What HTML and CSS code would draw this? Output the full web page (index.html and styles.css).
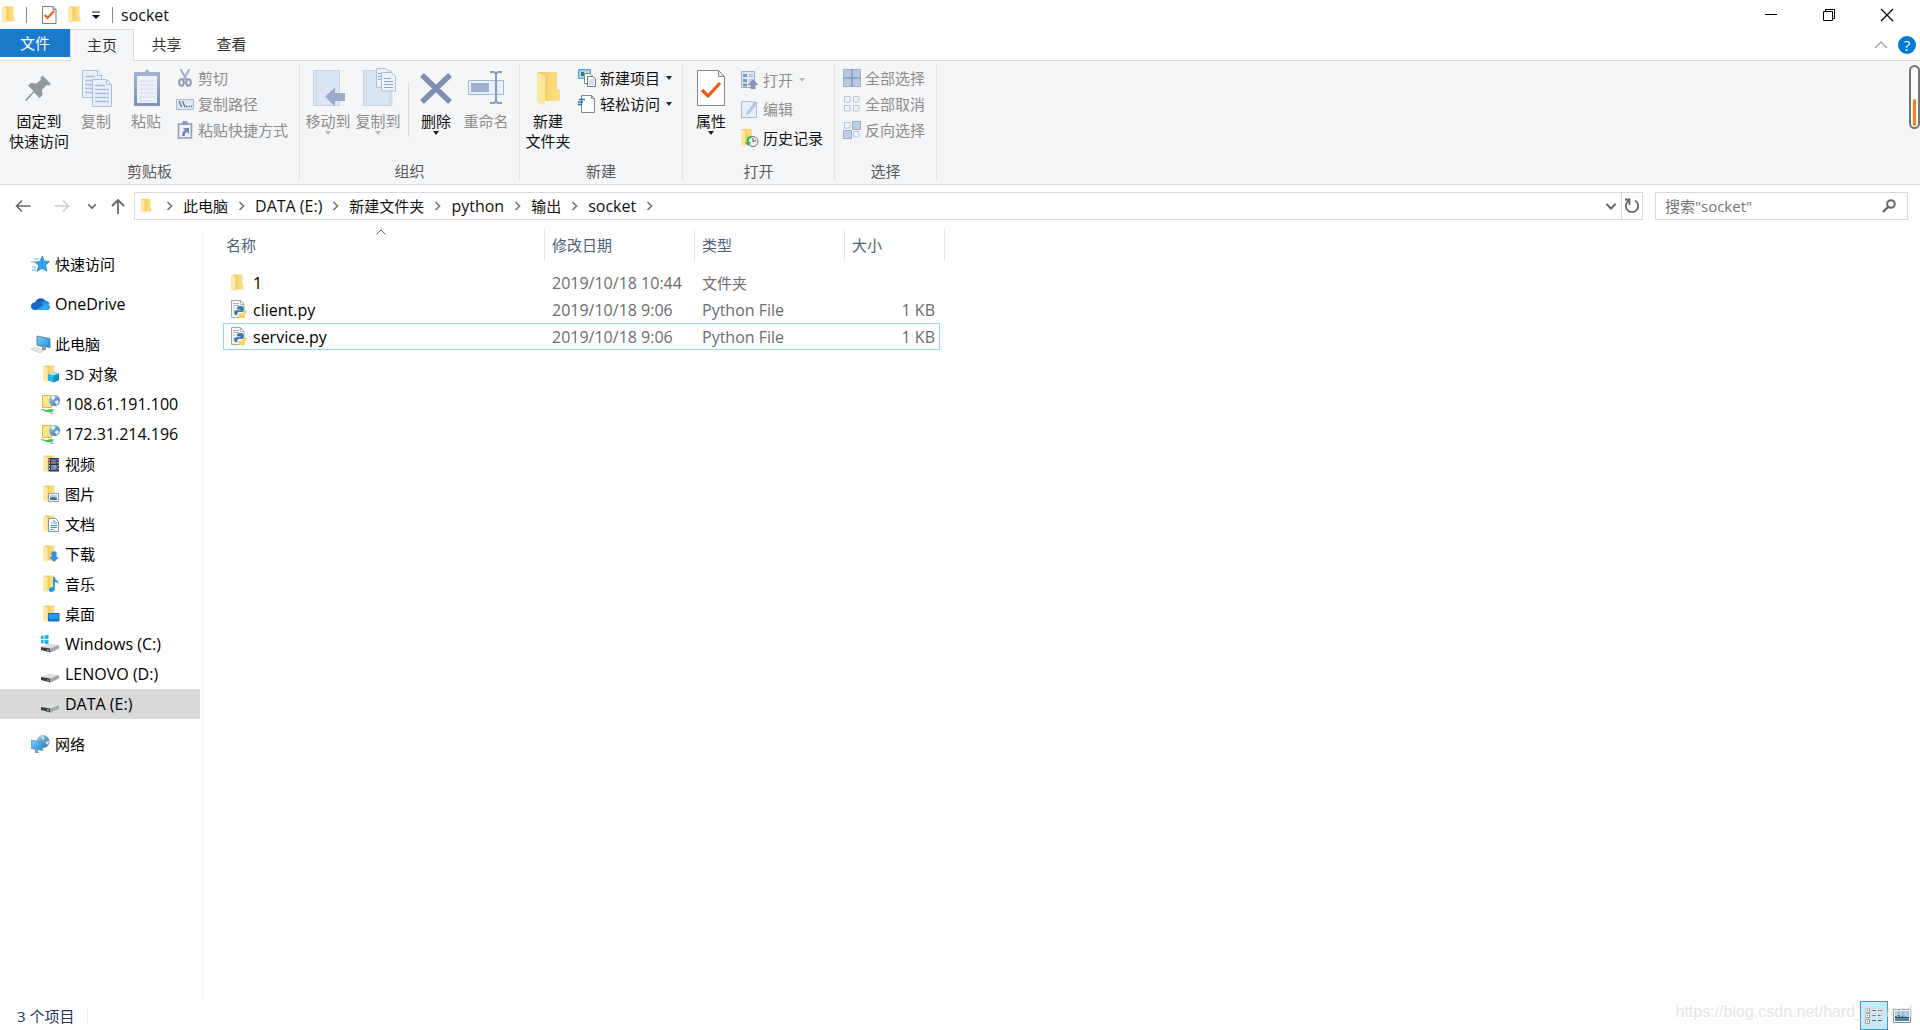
FILE: index.html
```html
<!DOCTYPE html>
<html lang="zh-CN">
<head>
<meta charset="utf-8">
<title>socket</title>
<link rel="stylesheet" href="styles.css">
</head>
<body>
<svg class="sprite" aria-hidden="true">
  <defs>
    <linearGradient id="g-folder" x1="0" x2="1" y1="0" y2="0"><stop offset="0" stop-color="#e9bf55"/><stop offset=".6" stop-color="#fbd978"/><stop offset="1" stop-color="#fddf86"/></linearGradient>
    <linearGradient id="g-globe" x1="0" x2="1" y1="0" y2="1"><stop offset="0" stop-color="#a9d3ec"/><stop offset="1" stop-color="#2c6f9f"/></linearGradient>
    <linearGradient id="g-screen" x1="0" x2="1" y1="0" y2="1"><stop offset="0" stop-color="#7fd0fb"/><stop offset="1" stop-color="#1f8fdd"/></linearGradient>
    <linearGradient id="g-board" x1="0" x2="0" y1="0" y2="1"><stop offset="0" stop-color="#a3b3cd"/><stop offset="1" stop-color="#7f92b5"/></linearGradient>
  </defs>
  <symbol id="i-folder" viewBox="0 0 20 20"><path d="M4 1.500h9.500v10l1 1v4H6z" fill="url(#g-folder)"/><path d="M2 1.500l4.500 2v15L2 16.500z" fill="#ffe9a8"/></symbol>
  <symbol id="i-3d" viewBox="0 0 20 20"><use href="#i-folder"/><path d="M7 10l6-2 5 1.500v6.500l-5.500 2.500L7 16.500z" fill="#2bb5dd"/><path d="M7 10l6-2 5 1.500-5.500 2z" fill="#a5e6f6"/><path d="M12.500 11.500l5.500-2v6.500l-5.500 2.500z" fill="#0a93bf"/></symbol>
  <symbol id="i-netloc" viewBox="0 0 20 20"><path d="M1.500 1.500h9v12h-9z" fill="#ffe48e" stroke="#e2b93f"/><circle cx="13.500" cy="6.500" r="5.500" fill="url(#g-globe)"/><path d="M10 3l3-1.500 1.500 2-3 3zM13.500 8l3-2 1.500 2-2 3z" fill="#e6f4fb"/><path d="M-1 15h4v1.500h-4zM9 19h4v1H9z" fill="#b7bcc0"/><path d="M1 15.500l4 2.500 6 .500 2-3-4-.500-3 1z" fill="#3fc45a"/></symbol>
  <symbol id="i-video" viewBox="0 0 20 20"><use href="#i-folder"/><path d="M7.500 4h10.500v13.500H7.500z" fill="#333"/><path d="M8.500 5v12M17 5v12" stroke="#ddd" stroke-width="1" stroke-dasharray="1.500 1.500"/><path d="M10 5h5.500v5H10z" fill="#3b76c8"/><path d="M10 11h5.500v5H10z" fill="#5a8fe0"/><path d="M10 7l3 1 2.500 2H10z" fill="#e64b3c"/><path d="M12 11l3.500 1v2z" fill="#ecc23b"/></symbol>
  <symbol id="i-picture" viewBox="0 0 20 20"><use href="#i-folder"/><path d="M7.500 9.500h10v8h-10z" fill="#fff" stroke="#979797"/><path d="M9 11h7v5H9z" fill="#a9cdec"/><path d="M9 14l3-1 4 1v2H9z" fill="#3c708c"/></symbol>
  <symbol id="i-doc" viewBox="0 0 20 20"><use href="#i-folder"/><path d="M7.500 4.500h7l3 3v10h-10z" fill="#fff" stroke="#8e8e8e"/><path d="M10 9h1.500m1.500 0h3M9.500 11.500h6.500M9.500 13.500h6.500M9.500 15.500h3" stroke="#3797dc"/><path d="M13 6v3" stroke="#3797dc"/></symbol>
  <symbol id="i-download" viewBox="0 0 20 20"><use href="#i-folder"/><path d="M10.500 7.500h5V13H18l-5 5-5-5h2.500z" fill="#3a8ee0"/></symbol>
  <symbol id="i-music" viewBox="0 0 20 20"><use href="#i-folder"/><path d="M12 3h1.800c0 3 4.500 3.500 4 8-.500-2-2-3-4-3v7c0 3.500-6 4-6 1 0-2.500 2.500-3 4.200-2.500z" fill="#1c9bea"/></symbol>
  <symbol id="i-desktop" viewBox="0 0 20 20"><use href="#i-folder"/><path d="M7.500 9.500h10.500v7.500H7.500z" fill="#1e9df1" stroke="#176fb5"/><path d="M8 16h10" stroke="#0c4f86" stroke-dasharray="2 1"/></symbol>
  <symbol id="i-drive" viewBox="0 0 20 20"><path d="M0 13l9-3.500 9 1.500-8.500 3.500z" fill="#dedee0"/><path d="M0 13l9.500 1.500v4L0 16z" fill="#3e3f42"/><path d="M9.500 14.500L18 11v3.500l-8.500 4z" fill="#a5a6aa"/><path d="M6 16l2 .500" stroke="#40e070" stroke-width="1.500"/></symbol>
  <symbol id="i-cdrive" viewBox="0 0 20 20"><use href="#i-drive"/><path d="M-1 2l3.500-.500v3.500H-1zM3.500 1.500L7.500.800V5h-4zM-1 6h3.500v3.500L-1 9zM3.500 6h4v4.200l-4-.700z" fill="#14b5ee"/></symbol>
  <symbol id="i-star" viewBox="0 0 20 20"><path d="M11.500 2l1.800 5.200 5.200.3-4 3.700 1.500 6-5-3-5 3.300 1.800-6-4-3.500 5-.4z" fill="#2fa4ee" stroke="#1578c2" stroke-width=".7"/><path d="M3 5h5M0 8h4M1 13h4M1 16h4" stroke="#6ab8ee"/></symbol>
  <symbol id="i-cloud" viewBox="0 0 20 20"><path d="M4 9c1-5 8-6.500 10.500-2l-5 5z" fill="#0d62bb"/><path d="M13 7c3-1 5 .500 5.500 3L12 14l-3-5z" fill="#1a8ce2"/><path d="M3.500 8.500c3-1.500 5-.500 7 1L17 16H3.500C-1.500 15.500-1 9 3.500 8.500z" fill="#1467c6"/><path d="M5 16l8-5.500c4-2 8 2 5.500 4.500-.500.700-1.200 1-2 1z" fill="#2aa5f0"/></symbol>
  <symbol id="i-pc" viewBox="0 0 20 20"><path d="M6 2l13 2.500v9L6 11.500z" fill="url(#g-screen)" stroke="#56636d" stroke-width=".7"/><path d="M11 13l4 .500v2.500h-4z" fill="#87929b"/><path d="M0 15l4-2 9 3.500L9 19z" fill="#e6e9eb" stroke="#b3b8bc" stroke-width=".6"/></symbol>
  <symbol id="i-network" viewBox="0 0 20 20"><circle cx="12" cy="7.500" r="6.500" fill="url(#g-globe)"/><path d="M9 2l4 1v3zM14 8l4-1-1 4z" fill="#d9eef8"/><path d="M0 6l11.500 2v8.500L0 14.500z" fill="url(#g-screen)" stroke="#5187b0" stroke-width=".6"/><path d="M4 15.500l3 .500v2l2 1H4z" fill="#8d989f"/></symbol>
  <symbol id="i-py" viewBox="0 0 20 20"><path d="M2.500.500h9l3.500 3.500v13.500H2.500z" fill="#f7f7f7" stroke="#a5a5a5"/><path d="M11.500.500v4H15M4 3.500h6M4 5.500h6M4 8h2M4 11h2" fill="none" stroke="#b5b5b5"/><g transform="translate(.6 .8) scale(.88)"><path d="M12 6c-2.500 0-3.500.800-3.500 2v2h4v.800H7.500c-3 0-3 5.700 0 5.700h1.200v-1.500c0-1.500 1-2.200 2-2.200h3.200c1.200 0 2-1 2-2V8c0-1.500-1.500-2-3.900-2z" fill="#3b78b0"/><path d="M13 19.500c2.500 0 3.500-.700 3.500-2v-1.500h-3.500v-.800h4.200c3 0 3-4.700.3-4.900v1.500c0 1.500-1 2.400-2 2.400h-3c-1.300 0-2.300 1-2.300 2v1.500c0 1.200 1 1.800 2.800 1.800z" fill="#ffd43b"/></g></symbol>
  <symbol id="i-check" viewBox="0 0 36 40"><path d="M4.500 2.500h21l6 6v29h-27z" fill="#fff" stroke="#888"/><path d="M25.500 2.500v6h6z" fill="#eee" stroke="#888"/><path d="M9 22l6 6 12-13" fill="none" stroke="#f4580f" stroke-width="3.200"/></symbol>
  <symbol id="i-qcheck" viewBox="0 0 16 20"><path d="M.5 1.500h10.500l3 3V18.500H.5z" fill="#fff" stroke="#7c7c7c"/><path d="M11 1.500v3h3" fill="none" stroke="#7c7c7c"/><path d="M2.500 10l3 3 6.500-7" fill="none" stroke="#ee5b1c" stroke-width="2"/></symbol>
  <symbol id="i-pin" viewBox="0 0 36 40"><path d="M21.500 7.500l8.500 8.500-2.500 1.500-2-.500-4.500 5 .500 5-3 3-5.500-5.500L5.500 33 4 32l8.500-9L7 17.500l3-2.500 5.500.500 4.500-4-.500-2z" fill="#8d9ba1"/></symbol>
  <symbol id="i-copy" viewBox="0 0 36 40"><g fill="#eaf0f9" stroke="#a9bddc"><path d="M4.500 2.500h15l4 4v23h-19z"/><path d="M19.500 2.500v5h5"/><path d="M14.500 11.500h14l5 5v22h-19z"/><path d="M28.500 11.500v5h5z"/></g><path d="M7 8.500h10M7 12.500h7M7 16.500h7M7 20.500h7M7 24.500h7M17 17.500h10M17 21.500h14M17 25.500h14M17 29.500h14M17 33.500h14" stroke="#a9bddc" stroke-width="1.300"/></symbol>
  <symbol id="i-paste" viewBox="0 0 36 40"><rect x="6" y="4" width="26" height="34" rx="1" fill="url(#g-board)"/><path d="M9 8h20v27H9z" fill="#edf2fa"/><path d="M11 13h16M11 17h16M11 21h16M11 25h16M11 29h16M11 33h16" stroke="#cfdbec"/><path d="M12 8l2-4h3a2 2.500 0 0 1 4 0h3l2 4z" fill="#a5b4cd"/></symbol>
  <symbol id="i-cut" viewBox="0 0 18 18"><path d="M4.500 0l6 11M13.500 0l-6 11" stroke="#a4b3cc" stroke-width="2"/><ellipse cx="5.500" cy="13.500" rx="2.300" ry="3.200" fill="none" stroke="#8b9cbb" stroke-width="2"/><ellipse cx="12.500" cy="13.500" rx="2.300" ry="3.200" fill="none" stroke="#8b9cbb" stroke-width="2"/></symbol>
  <symbol id="i-path" viewBox="0 0 18 18"><path d="M.5 4.500h17v10H.5z" fill="#dfe8f5" stroke="#a9bbd8"/><path d="M3 6l2.500 6M6.500 6L9 12M10 11.500h1.500m1 0H14m1 0h1" stroke="#5c6e91" stroke-width="1.300"/></symbol>
  <symbol id="i-shortcut" viewBox="0 0 18 18"><path d="M2.500 3h13v14h-13z" fill="#eef3fb" stroke="#8c9dbd" stroke-width="1.600"/><path d="M5 4l2-4h4l2 4z" fill="#8c9dbd"/><path d="M7 7h6v6l-2-2c-1.500.500-2.300 2-2.300 4H6c0-3 1-4.800 3-6z" fill="#7488ae"/></symbol>
  <symbol id="i-moveto" viewBox="0 0 36 40"><path d="M3.500 2.500h26v35h-26z" fill="#dce6f3" stroke="#c5d3e7"/><path d="M6.500 3v34" stroke="#cad7e9"/><path d="M15 28.500l10-9v5.500h10v8H25v5.500z" fill="#9baccb"/></symbol>
  <symbol id="i-copyto" viewBox="0 0 36 40"><path d="M3.500 2.500h28v35h-28z" fill="#dce6f3" stroke="#c5d3e7"/><path d="M6.500 3v34" stroke="#cad7e9"/><g fill="#edf3fb" stroke="#a9bddc"><path d="M16.500.500h9l3 3v16h-12z"/><path d="M21.500 4.500h10l4 4v14.500h-14z"/></g><path d="M24 10.500h7M24 13.500h9M24 16.500h9M24 19.500h9M18 5.500h3M18 8.500h3M18 11.500h3" stroke="#8fa6cc"/><path d="M28.500 26c3-2 4 0 4 3v8h-4z" fill="#cfdbec"/></symbol>
  <symbol id="i-delete" viewBox="0 0 36 40"><path d="M4 7l28 27M32 7L4 34" stroke="#7e90b1" stroke-width="5.500"/></symbol>
  <symbol id="i-rename" viewBox="0 0 36 40"><path d="M.5 12.500h35v14H.5z" fill="#eaf1fa" stroke="#a3b7d8"/><path d="M3 15h18v9H3z" fill="#a0b1d0"/><path d="M22 4h4l2 1.500L30 4h4M22 35h4l2-1.500 2 1.500h4M28 5v29" fill="none" stroke="#8b9cbd" stroke-width="2.200"/></symbol>
  <symbol id="i-bigfolder" viewBox="0 0 36 40"><path d="M7 4h20v17l3 1v11H14z" fill="url(#g-folder)"/><path d="M7 4l8 4v30l-8-4z" fill="#ffe7a0"/></symbol>
  <symbol id="i-newitem" viewBox="0 0 18 18"><path d="M.7.700h11.600v8.600H.7z" fill="#a9dcf3" stroke="#3b8fc0"/><path d="M3 3h3v4H3z" fill="#367f5d"/><path d="M6.500 4.500h5.500l2 2v8H6.500z" fill="#fff" stroke="#888"/><path d="M9.500 7.500H15l2.500 2.500v7.500h-8z" fill="#fff" stroke="#777"/><path d="M11 11h5M11 13h5M11 15h5" stroke="#9bbbe0"/></symbol>
  <symbol id="i-easy" viewBox="0 0 18 18"><path d="M3.500.500h10l3 3v14h-13z" fill="#fff" stroke="#888"/><path d="M13.500.500v3h3" fill="none" stroke="#888"/><path d="M1 4.500h6M0 7h5M-1 9.500h5" stroke="#1b76c4" stroke-width="1.400"/></symbol>
  <symbol id="i-open" viewBox="0 0 18 18"><path d="M.5.500h13v16H.5z" fill="#dfe8f5" stroke="#9fb1d2"/><path d="M2 3h4v3H2zM2 8h4v3H2zM2 12.500h4v3H2z" fill="#8195ba"/><path d="M8 3.500h4M8 5.500h4M8 9h3" stroke="#9fb1d2"/><path d="M12 8l5.500 6h-3v4h-5v-4h-3z" fill="#8597b9"/></symbol>
  <symbol id="i-edit" viewBox="0 0 18 18"><path d="M.5 1.500h11l4 4v12H.5z" fill="#e8eff9" stroke="#a9bbd9"/><path d="M5 15l1-3L14 1l3 2-8.500 10.500z" fill="#b5c5df"/></symbol>
  <symbol id="i-history" viewBox="0 0 18 18"><path d="M1 0h10v16H4z" fill="url(#g-folder)"/><path d="M0 0l4 2v16l-4-2z" fill="#ffe9a8"/><circle cx="12" cy="12.500" r="5" fill="#eee" stroke="#777"/><path d="M12 9v3.500l3-1" fill="none" stroke="#555"/><path d="M10 7c-4 0-5 4-4 6l-2 .500 3.500 3.500 2.500-4-2 .200C7 11 8 9 11 8.500z" fill="#2eb84b"/></symbol>
  <symbol id="i-selall" viewBox="0 0 18 18"><path d="M.5.500h17v17H.5z" fill="#b9c9e2" stroke="#9fb1cf"/><path d="M9 0v18M0 9h18" stroke="#8396b8" stroke-width="1.500"/></symbol>
  <symbol id="i-selnone" viewBox="0 0 18 18"><path d="M1.500 1.500h5.500v5.500H1.500zM10.500 1.500h5.500v5.500h-5.500zM1.500 10.500h5.500v5.500H1.500zM10.500 10.500h5.500v5.500h-5.500z" fill="#f1f5fc" stroke="#b4c5e2"/></symbol>
  <symbol id="i-invert" viewBox="0 0 18 18"><path d="M1.500 1.500h5.500v5.500H1.500zM10.500 10.500h5.500v5.500h-5.500z" fill="#f1f5fc" stroke="#b4c5e2"/><path d="M9.500.500h8v8h-8zM.5 9.500h8v8h-8z" fill="#c0cee5" stroke="#98abcb"/></symbol>
  <symbol id="i-chev" viewBox="0 0 12 12"><path d="M4 2l4 4-4 4" fill="none" stroke="#777" stroke-width="1.700"/></symbol>
  <symbol id="i-down" viewBox="0 0 12 12"><path d="M1.500 4L6 8.500 10.500 4" fill="none" stroke="currentColor" stroke-width="2"/></symbol>
  <symbol id="i-left" viewBox="0 0 16 16"><path d="M15.500 8H1M7 2.500L1.500 8 7 13.500" fill="none" stroke="currentColor" stroke-width="1.600"/></symbol>
</svg>

<header class="titlebar">
  <svg class="ico-20"><use href="#i-folder"/></svg>
  <span class="bar bar-first"></span>
  <button class="quick quick-check" aria-label="属性"><svg class="ico-q"><use href="#i-qcheck"/></svg></button>
  <button class="quick" aria-label="新建文件夹"><svg class="ico-20"><use href="#i-folder"/></svg></button>
  <button class="quick quick-more" aria-label="自定义快速访问工具栏"><svg width="8" height="8"><path d="M0 1h8" stroke="#111"/><path d="M0 4h8L4 8z" fill="#111"/></svg></button>
  <span class="bar"></span>
  <h1 class="title">socket</h1>
  <div class="winbtns">
    <button aria-label="最小化"><svg width="12" height="12"><path d="M0 5.500h12" stroke="#000"/></svg></button>
    <button aria-label="还原"><svg width="12" height="12"><path d="M.5 2.500h9v9h-9zM2.500 2V.500h9v9H10" fill="none" stroke="#000"/></svg></button>
    <button aria-label="关闭"><svg width="12" height="12"><path d="M0 0l12 12M12 0L0 12" stroke="#000" stroke-width="1.200"/></svg></button>
  </div>
</header>

<nav class="tabs">
  <button class="tab tab-file">文件</button>
  <button class="tab tab-on">主页</button>
  <button class="tab">共享</button>
  <button class="tab">查看</button>
  <div class="tabs-end">
    <button aria-label="最小化功能区"><svg width="12" height="8"><path d="M0 7l6-6 6 6" fill="none" stroke="#999" stroke-width="1.200"/></svg></button>
    <button class="help" aria-label="帮助">?</button>
  </div>
</nav>

<section class="ribbon">
  <div class="group g-clip">
    <div class="tools">
      <button class="big big-wide"><svg class="ico-big"><use href="#i-pin"/></svg><span>固定到<br>快速访问</span></button>
      <button class="big" disabled><svg class="ico-big"><use href="#i-copy"/></svg><span>复制</span></button>
      <button class="big" disabled><svg class="ico-big"><use href="#i-paste"/></svg><span>粘贴</span></button>
      <div class="smalls">
        <button class="small" disabled><svg class="ico-18"><use href="#i-cut"/></svg>剪切</button>
        <button class="small" disabled><svg class="ico-18"><use href="#i-path"/></svg>复制路径</button>
        <button class="small" disabled><svg class="ico-18"><use href="#i-shortcut"/></svg>粘贴快捷方式</button>
      </div>
    </div>
    <h2 class="gname">剪贴板</h2>
  </div>
  <div class="group g-org">
    <div class="tools">
      <button class="big" disabled><svg class="ico-big"><use href="#i-moveto"/></svg><span>移动到</span><i class="caret"></i></button>
      <button class="big" disabled><svg class="ico-big"><use href="#i-copyto"/></svg><span>复制到</span><i class="caret"></i></button>
      <span class="split"></span>
      <button class="big"><svg class="ico-big"><use href="#i-delete"/></svg><span>删除</span><i class="caret"></i></button>
      <button class="big" disabled><svg class="ico-big"><use href="#i-rename"/></svg><span>重命名</span></button>
    </div>
    <h2 class="gname">组织</h2>
  </div>
  <div class="group g-new">
    <div class="tools">
      <button class="big"><svg class="ico-big"><use href="#i-bigfolder"/></svg><span>新建<br>文件夹</span></button>
      <div class="smalls">
        <button class="small"><svg class="ico-18"><use href="#i-newitem"/></svg>新建项目<i class="caret"></i></button>
        <button class="small"><svg class="ico-18"><use href="#i-easy"/></svg>轻松访问<i class="caret"></i></button>
      </div>
    </div>
    <h2 class="gname">新建</h2>
  </div>
  <div class="group g-open">
    <div class="tools">
      <button class="big"><svg class="ico-big"><use href="#i-check"/></svg><span>属性</span><i class="caret"></i></button>
      <div class="smalls smalls-loose">
        <button class="small" disabled><svg class="ico-18"><use href="#i-open"/></svg>打开<i class="caret"></i></button>
        <button class="small" disabled><svg class="ico-18"><use href="#i-edit"/></svg>编辑</button>
        <button class="small"><svg class="ico-18"><use href="#i-history"/></svg>历史记录</button>
      </div>
    </div>
    <h2 class="gname">打开</h2>
  </div>
  <div class="group g-select">
    <div class="tools">
      <div class="smalls">
        <button class="small" disabled><svg class="ico-18"><use href="#i-selall"/></svg>全部选择</button>
        <button class="small" disabled><svg class="ico-18"><use href="#i-selnone"/></svg>全部取消</button>
        <button class="small" disabled><svg class="ico-18"><use href="#i-invert"/></svg>反向选择</button>
      </div>
    </div>
    <h2 class="gname">选择</h2>
  </div>
  <div class="gauge"><span></span></div>
</section>

<div class="address">
  <button class="nav nav-back" aria-label="后退"><svg width="16" height="16"><use href="#i-left"/></svg></button>
  <button class="nav nav-fwd" aria-label="前进" disabled><svg class="flip" width="16" height="16"><use href="#i-left"/></svg></button>
  <button class="nav nav-recent" aria-label="最近浏览的位置"><svg width="10" height="10"><use href="#i-down"/></svg></button>
  <button class="nav nav-up" aria-label="上移"><svg width="16" height="16"><path d="M8 16V2M2 8l6-6 6 6" fill="none" stroke="currentColor" stroke-width="1.800"/></svg></button>
  <div class="crumbs">
    <svg class="ico-20"><use href="#i-folder"/></svg>
    <svg class="chev"><use href="#i-chev"/></svg><a href="#">此电脑</a>
    <svg class="chev"><use href="#i-chev"/></svg><a class="lat" href="#">DATA (E:)</a>
    <svg class="chev"><use href="#i-chev"/></svg><a href="#">新建文件夹</a>
    <svg class="chev"><use href="#i-chev"/></svg><a class="lat" href="#">python</a>
    <svg class="chev"><use href="#i-chev"/></svg><a href="#">输出</a>
    <svg class="chev"><use href="#i-chev"/></svg><a class="lat" href="#">socket</a>
    <svg class="chev"><use href="#i-chev"/></svg>
    <button class="nav nav-drop" aria-label="以前的位置"><svg width="12" height="12"><use href="#i-down"/></svg></button>
    <button class="nav nav-refresh" aria-label="刷新"><svg width="16" height="16"><path d="M11 2.500a6.200 6.200 0 1 1-6.500.300M1 1.500h4.500V7" fill="none" stroke="currentColor" stroke-width="1.800"/></svg></button>
  </div>
  <form class="search">
    <input type="text" aria-label="搜索" placeholder='搜索"socket"'>
    <button class="nav" type="button" aria-label="搜索"><svg width="14" height="14"><circle cx="9" cy="5" r="3.800" fill="none" stroke="currentColor" stroke-width="2"/><path d="M6.500 7.500L1 13" stroke="currentColor" stroke-width="2.400"/></svg></button>
  </form>
</div>

<div class="panes">
  <nav class="side">
    <ul><li><a href="#"><svg class="ico-20"><use href="#i-star"/></svg>快速访问</a></li></ul>
    <ul><li><a class="lat" href="#"><svg class="ico-20"><use href="#i-cloud"/></svg>OneDrive</a></li></ul>
    <ul>
      <li><a href="#"><svg class="ico-20"><use href="#i-pc"/></svg>此电脑</a></li>
      <li class="sub"><a href="#"><svg class="ico-20"><use href="#i-3d"/></svg>3D 对象</a></li>
      <li class="sub"><a class="lat" href="#"><svg class="ico-20"><use href="#i-netloc"/></svg>108.61.191.100</a></li>
      <li class="sub"><a class="lat" href="#"><svg class="ico-20"><use href="#i-netloc"/></svg>172.31.214.196</a></li>
      <li class="sub"><a href="#"><svg class="ico-20"><use href="#i-video"/></svg>视频</a></li>
      <li class="sub"><a href="#"><svg class="ico-20"><use href="#i-picture"/></svg>图片</a></li>
      <li class="sub"><a href="#"><svg class="ico-20"><use href="#i-doc"/></svg>文档</a></li>
      <li class="sub"><a href="#"><svg class="ico-20"><use href="#i-download"/></svg>下载</a></li>
      <li class="sub"><a href="#"><svg class="ico-20"><use href="#i-music"/></svg>音乐</a></li>
      <li class="sub"><a href="#"><svg class="ico-20"><use href="#i-desktop"/></svg>桌面</a></li>
      <li class="sub"><a class="lat" href="#"><svg class="ico-20"><use href="#i-cdrive"/></svg>Windows (C:)</a></li>
      <li class="sub"><a class="lat" href="#"><svg class="ico-20"><use href="#i-drive"/></svg>LENOVO (D:)</a></li>
      <li class="sub"><a class="lat current" href="#"><svg class="ico-20"><use href="#i-drive"/></svg>DATA (E:)</a></li>
    </ul>
    <ul><li><a href="#"><svg class="ico-20"><use href="#i-network"/></svg>网络</a></li></ul>
  </nav>
  <main class="files">
    <table>
      <thead>
        <tr>
          <th class="c-name">名称<svg class="sort" width="10" height="6"><path d="M.5 5.500L5 1l4.500 4.500" fill="none" stroke="#666"/></svg></th>
          <th class="c-date">修改日期</th><th class="c-type">类型</th><th class="c-size">大小</th>
        </tr>
      </thead>
      <tbody>
        <tr><td><div class="fname"><svg class="ico-20"><use href="#i-folder"/></svg>1</div></td><td>2019/10/18 10:44</td><td class="cjk">文件夹</td><td></td></tr>
        <tr><td><div class="fname"><svg class="ico-20"><use href="#i-py"/></svg>client.py</div></td><td>2019/10/18 9:06</td><td>Python File</td><td class="num">1 KB</td></tr>
        <tr class="focus"><td><div class="fname"><svg class="ico-20"><use href="#i-py"/></svg>service.py</div></td><td>2019/10/18 9:06</td><td>Python File</td><td class="num">1 KB</td></tr>
      </tbody>
    </table>
  </main>
</div>

<footer class="status">
  <span class="count">3 个项目</span>
  <div class="views">
    <button class="view view-on" aria-label="详细信息"><svg width="20" height="18"><g fill="#fff" stroke="#999"><path d="M1.500 1.500h4v4h-4zM1.500 6.500h4v4h-4zM1.500 12.500h4v4h-4z"/></g><path d="M3 3h1v1H3zM3 8h1v1H3z" fill="#4a8a3c"/><path d="M3 14h1v1H3z" fill="#c33"/><path d="M8 3.500h4m2 0h4M8 8.500h4m2 0h4M8 13.500h4m2 0h4" stroke="#666"/></svg></button>
    <button class="view" aria-label="大图标"><svg width="18" height="14"><path d="M.5.500h17v13H.5z" fill="#fff" stroke="#888"/><path d="M2 2h14v10H2z" fill="#8fc1ee"/><path d="M2 7l4-1 5 2 5-1v2H2z" fill="#2f5f4d"/><path d="M2 9h14v3H2z" fill="#4e86b4"/></svg></button>
    <span class="mark">https://blog.csdn.net/hard_reward</span>
  </div>
</footer>
</body>
</html>
```
FILE: styles.css
```css
* { box-sizing: border-box; }

body {
  margin: 0;
  min-height: 100vh;
  display: flex;
  flex-direction: column;
  background: #fff;
  color: #111;
  font: 15px/20px "Open Sans", "Noto Sans CJK SC", sans-serif;
}

button {
  display: flex;
  align-items: center;
  justify-content: center;
  margin: 0;
  padding: 0;
  border: 0;
  background: none;
  color: inherit;
  font: inherit;
  white-space: nowrap;
}

a { color: inherit; text-decoration: none; white-space: nowrap; }
ul { margin: 0; padding: 0; list-style: none; }
svg { flex: none; display: block; overflow: visible; }

.sprite { position: absolute; width: 0; height: 0; }
.ico-20 { width: 20px; height: 20px; }
.ico-18 { width: 18px; height: 18px; }
.ico-q { width: 16px; height: 20px; }
.ico-big { width: 36px; height: 40px; }
.lat { font-size: 16px; }

/* Title bar */
.titlebar { display: flex; align-items: center; height: 29px; }
.bar { width: 1px; height: 16px; background: #888; }
.bar-first { margin: 0 15px 0 6px; }
.quick { width: 24px; }
.quick-check { width: 16px; margin-right: 6px; }
.quick-more { width: 16px; margin-right: 8px; }
.title { margin: 0 0 0 8px; font-size: 16px; font-weight: 400; }
.winbtns { display: flex; margin-left: auto; padding-right: 4px; }
.winbtns button { width: 58px; height: 29px; }

/* Ribbon tabs */
.tabs { display: flex; height: 31px; color: #333; }
.tab { width: 65px; height: 30px; }
.tab-file { width: 70px; height: 28px; background: #1979ca; color: #fff; }
.tab-on {
  width: 64px;
  height: 32px;
  padding-bottom: 2px;
  border: 1px solid #dadbdc;
  border-bottom: 0;
  background: #f5f6f7;
  z-index: 1;
}
.tabs-end { display: flex; align-items: center; gap: 11px; margin-left: auto; padding-right: 4px; }
.help { width: 18px; height: 18px; border-radius: 50%; background: #0078d7; color: #fff; }

/* Ribbon */
.ribbon {
  position: relative;
  display: flex;
  height: 125px;
  padding: 2px 0 3px;
  border: solid #dadbdc;
  border-width: 1px 0;
  background: #f5f6f7;
}
.group { display: flex; flex-direction: column; border-right: 1px solid #e1e2e3; }
.g-clip { width: 300px; }
.g-org { width: 220px; }
.g-new { width: 163px; }
.g-open { width: 152px; }
.g-select { width: 102px; }
.tools { display: flex; flex: 1; padding-left: 3px; }
.g-clip .tools { padding-left: 7px; }
.gname { margin: 0; color: #5a5a5a; font-size: 15px; line-height: 20px; font-weight: 400; text-align: center; }

.big { flex-direction: column; justify-content: flex-start; width: 50px; padding-top: 5px; }
.big span { margin-top: 3px; }
.big-wide { width: 64px; }
.big:disabled, .small:disabled { color: #8d8d8d; }
.caret { border: solid transparent; border-width: 4px 3px 0; border-top-color: #222; }
:disabled .caret { border-top-color: #bbb; }
.split { width: 1px; height: 55px; margin: 19px 2px 0 5px; background: #dcdddf; }

.smalls { display: flex; flex-direction: column; align-items: flex-start; padding: 2px 0 0 5px; }
.small { gap: 4px; height: 26px; }
.small .caret { margin-left: 2px; }
.smalls-loose { gap: 3px; padding-top: 4px; }

.gauge {
  position: absolute;
  top: 4px;
  right: 0;
  width: 11px;
  height: 64px;
  padding: 32px 2px 1px;
  border: 2px solid #757575;
  border-radius: 6px;
  background: #fafafa;
}
.gauge span { display: block; height: 27px; border-radius: 2px; background: #ff7f1e; }

/* Address bar */
.address { display: flex; padding: 7px 12px 9px 4px; }
.nav { color: #666; }
.nav:disabled { color: #ccc; }
.nav-back { width: 38px; }
.nav-fwd { width: 40px; }
.nav-recent { width: 20px; }
.nav-up { width: 32px; }
.flip { transform: scaleX(-1); }
.crumbs {
  display: flex;
  flex: 1;
  align-items: center;
  height: 28px;
  padding-left: 4px;
  border: 1px solid #d9d9d9;
}
.crumbs .ico-20 { width: 17px; }
.chev { width: 27px; height: 12px; }
.nav-drop { width: 20px; height: 26px; margin-left: auto; }
.nav-refresh { width: 21px; height: 26px; border-left: 1px solid #d9d9d9; }
.search {
  display: flex;
  width: 253px;
  height: 28px;
  margin-left: 12px;
  padding: 0 11px 0 9px;
  border: 1px solid #d9d9d9;
}
.search input {
  flex: 1;
  min-width: 0;
  padding: 0;
  border: 0;
  outline: 0;
  background: none;
  font: inherit;
}
.search input::placeholder { color: #757575; opacity: 1; }

/* Panes */
.panes { display: flex; flex: 1; }
.side { display: flex; flex-direction: column; gap: 10px; width: 200px; padding-top: 20px; color: #000; }
.side a { display: flex; align-items: center; gap: 4px; height: 30px; padding-left: 31px; }
.side .sub a { padding-left: 41px; }
.side .current { background: #d9d9d9; }

.files { flex: 1; margin-left: 2px; padding-left: 20px; border-left: 1px solid #f5f5f5; }
.files table { width: 722px; border-collapse: separate; border-spacing: 0; table-layout: fixed; }
.files th {
  position: relative;
  height: 32px;
  padding: 0 0 0 7px;
  border-right: 1px solid #e5e5e5;
  color: #4c607a;
  font-weight: 400;
  text-align: left;
}
.files .c-name { width: 322px; padding-left: 3px; }
.c-date, .c-type { width: 150px; }
.c-size { width: 100px; }
.sort { position: absolute; top: 0; left: 50%; margin-left: -8px; }
.files tbody::before { content: ""; display: block; height: 8px; }
.files td { height: 27px; padding: 0 0 0 7px; color: #6d6d6d; font-size: 16px; white-space: nowrap; }
.files .cjk { font-size: 15px; }
.files .num { padding-right: 10px; text-align: right; }
.fname { display: flex; align-items: center; gap: 4px; color: #000; }
.fname .ico-20 { margin-left: -1px; }
.focus { position: relative; }
.focus::after { content: ""; position: absolute; inset: 0 5px 0 0; border: 1px solid #99d1ff; }

/* Status bar */
.status { display: flex; align-items: center; justify-content: space-between; height: 29px; color: #1e395b; }
.count { padding: 0 13px 0 17px; border-right: 1px solid #f0f0f0; line-height: 14px; }
.views { position: relative; display: flex; padding-right: 4px; }
.view { width: 28px; height: 29px; }
.view-on { border: 1px solid #26a0da; background: #cbe8f6; }
.mark {
  position: absolute;
  right: 7px;
  top: 1px;
  color: rgba(222, 222, 222, .8);
  font: 16px/20px "Liberation Sans", sans-serif;
  pointer-events: none;
}
```
